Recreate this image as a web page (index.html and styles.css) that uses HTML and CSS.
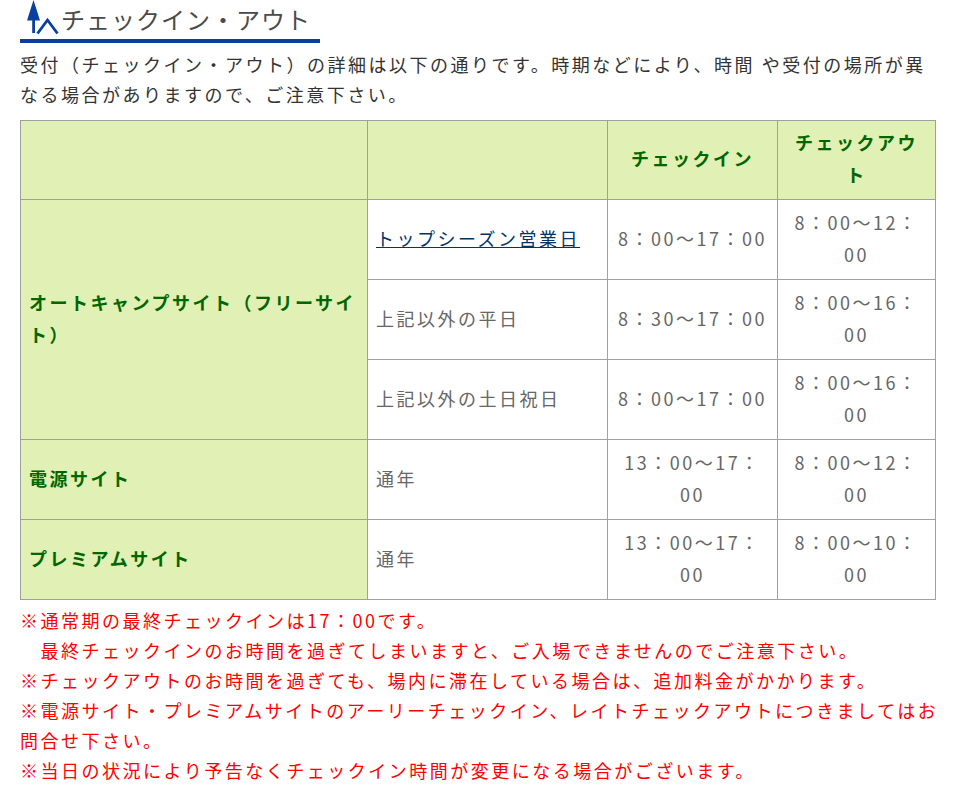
FILE: index.html
```html
<!DOCTYPE html>
<html lang="ja">
<head>
<meta charset="utf-8">
<title>チェックイン・アウト</title>
<link rel="stylesheet" href="styles.css">
</head>
<body>
<div class="page">
  <h2 class="title">
    <svg class="title-icon" width="40" height="36" viewBox="0 0 40 36" aria-hidden="true">
      <path d="M6.5 0 L0 20.5 L13 20.5 Z" fill="#0a3fa0"/>
      <rect x="5.2" y="14" width="2.8" height="19" fill="#0a3fa0"/>
      <path d="M10.5 33.5 L20.5 20 L30.5 33.5" fill="none" stroke="#0a3fa0" stroke-width="2.8"/>
    </svg>
    <span class="title-text">チェックイン・アウト</span>
  </h2>
  <p class="intro">受付（チェックイン・アウト）の詳細は以下の通りです。時期などにより、時間 や受付の場所が異なる場合がありますので、ご注意下さい。</p>
  <table class="times">
    <colgroup>
      <col class="c1"><col class="c2"><col class="c3"><col class="c4">
    </colgroup>
    <tr class="head">
      <th></th><th></th><th>チェックイン</th><th>チェックアウト</th>
    </tr>
    <tr>
      <th class="site" rowspan="3">オートキャンプサイト（フリーサイト）</th>
      <td><a href="#">トップシーズン営業日</a></td>
      <td class="t">8：00～17：00</td>
      <td class="t">8：00～12：00</td>
    </tr>
    <tr>
      <td>上記以外の平日</td>
      <td class="t">8：30～17：00</td>
      <td class="t">8：00～16：00</td>
    </tr>
    <tr>
      <td>上記以外の土日祝日</td>
      <td class="t">8：00～17：00</td>
      <td class="t">8：00～16：00</td>
    </tr>
    <tr>
      <th class="site">電源サイト</th>
      <td>通年</td>
      <td class="t">13：00～17：00</td>
      <td class="t">8：00～12：00</td>
    </tr>
    <tr>
      <th class="site">プレミアムサイト</th>
      <td>通年</td>
      <td class="t">13：00～17：00</td>
      <td class="t">8：00～10：00</td>
    </tr>
  </table>
  <div class="notes">
    <p>※通常期の最終チェックインは17：00です。</p>
    <p>　最終チェックインのお時間を過ぎてしまいますと、ご入場できませんのでご注意下さい。</p>
    <p>※チェックアウトのお時間を過ぎても、場内に滞在している場合は、追加料金がかかります。</p>
    <p>※電源サイト・プレミアムサイトのアーリーチェックイン、レイトチェックアウトにつきましてはお問合せ下さい。</p>
    <p>※当日の状況により予告なくチェックイン時間が変更になる場合がございます。</p>
  </div>
</div>
</body>
</html>
```

FILE: styles.css
```css
html, body {
  margin: 0;
  padding: 0;
  background: #ffffff;
}
body {
  font-family: "Noto Sans CJK JP", "Noto Sans", sans-serif;
  font-size: 18px;
  letter-spacing: 2.5px;
  color: #333333;
}
.page {
  width: 921px;
  margin-left: 20px;
}
.title {
  margin: 0;
  width: 300px;
  height: 39px;
  display: flex;
  align-items: flex-start;
  border-bottom: 4px solid #0a3fa0;
  font-weight: normal;
}
.title-icon {
  display: block;
  margin-left: 7px;
  flex: none;
}
.title-text {
  margin-left: -6px;
  font-size: 24px;
  line-height: 38px;
  letter-spacing: 1px;
  color: #4a4a4a;
}
.intro {
  margin: 6px 0 11px;
  line-height: 30px;
  color: #333333;
}
.times {
  width: 915px;
  table-layout: fixed;
  border-collapse: collapse;
}
.c1 { width: 347px; }
.c2 { width: 240px; }
.c3 { width: 170px; }
.c4 { width: 158px; }
.times th,
.times td {
  border: 1px solid #a0a0a0;
  height: 80px;
  padding: 0 8px 4px;
  box-sizing: border-box;
  line-height: 32px;
  vertical-align: middle;
}
.times .head th {
  height: 79px;
}
.times th {
  background: #e1f0b4;
  color: #006600;
  font-weight: bold;
  text-align: center;
}
.times th.site {
  text-align: left;
}
.times td {
  color: #666666;
  text-align: left;
}
.times td.t {
  text-align: center;
}
.times a {
  color: #003366;
  text-decoration: underline;
}
.notes {
  margin-top: 5px;
  color: #ff0000;
}
.notes p {
  margin: 0;
  line-height: 30px;
}
```
